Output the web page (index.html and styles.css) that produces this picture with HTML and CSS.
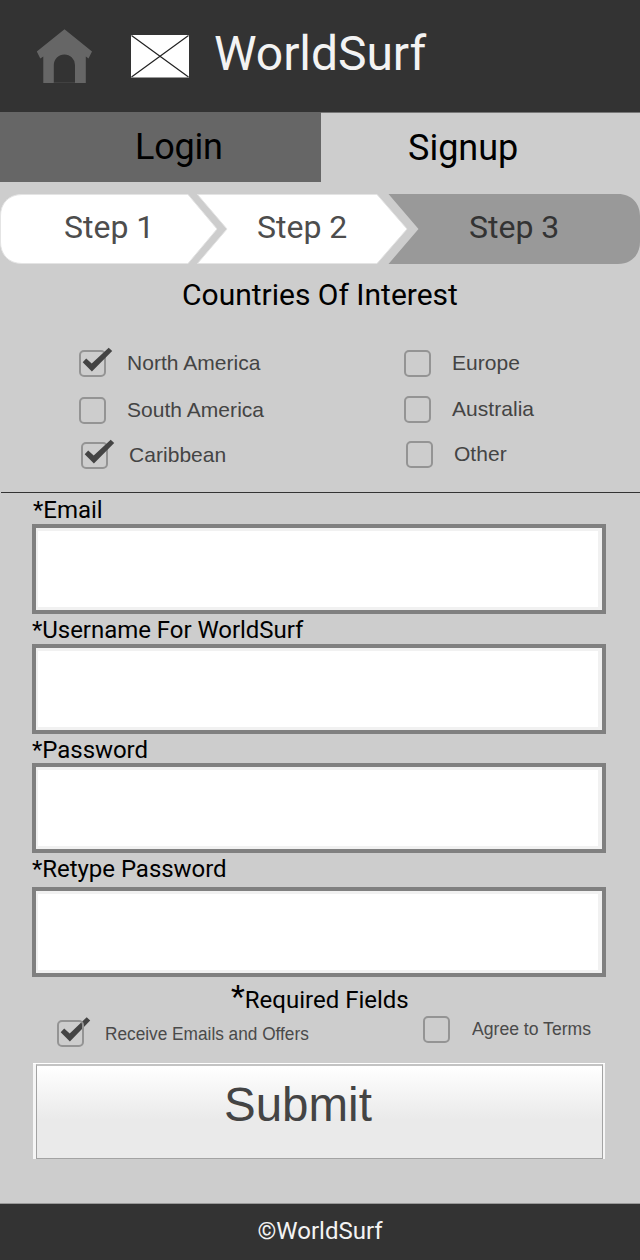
FILE: index.html
```html
<!DOCTYPE html>
<html lang="en">
<head>
<meta charset="utf-8">
<title>WorldSurf</title>
<link rel="stylesheet" href="styles.css">
</head>
<body>
<header class="topbar">
  <svg class="home" width="56" height="54" viewBox="0 0 56 54"><path fill="#666" d="M28.5.3 56 22.5l-3.5 7-2.7-2V54H39V36a10.6 10.6 0 0 0-21.2 0v18H7.3V27.5l-3 2-3.5-7z"/><path stroke="#484848" stroke-width=".7" d="M18 53.500H39"/></svg>
  <svg class="mail" width="58" height="43" viewBox="0 0 58 43"><path fill="#fff" d="M0 0h58v42.5H0z"/><path stroke="#222" stroke-width="1.2" d="M.5.5 57.500 42M57.500.5.5 42"/></svg>
  <h1 class="brand">WorldSurf</h1>
</header>
<nav class="tabs">
  <a class="tab tab-login">Login</a>
  <a class="tab tab-signup">Signup</a>
</nav>
<ol class="steps">
  <svg class="steps-shape" width="640" height="70" viewBox="0 0 640 70">
    <path fill="#fff" stroke="#e4e4e4" d="M22 .5H188L217 35 188 69.500H22C8 69.500.5 60 .5 48V22C.5 10 8 .5 22 .5z"/>
    <path fill="#fff" stroke="#e4e4e4" d="M197.500 .5H377L407 35 377 69.500H197.500L227 35z"/>
    <path fill="#999" d="M388.500 0H618C632 0 640 10 640 22V48C640 60 632 70 618 70H388.500L418.500 35z"/>
  </svg>
  <li class="step step-1">Step 1</li>
  <li class="step step-2">Step 2</li>
  <li class="step step-3">Step 3</li>
</ol>
<h2 class="interest-title">Countries Of Interest</h2>
<section class="interests">
  <div class="column">
    <label class="option"><svg class="box" width="27" height="27"><rect class="frame" x="1" y="1" width="25" height="25" rx="4"/><path class="tick" d="M3.700 12.200 7.200 8.500l5.500 5L29.700-2.300 33.200 1 12.900 21.500z"/></svg>North America</label>
    <label class="option second"><svg class="box" width="27" height="27"><rect class="frame" x="1" y="1" width="25" height="25" rx="4"/></svg>South America</label>
    <label class="option third"><svg class="box" width="27" height="27"><rect class="frame" x="1" y="1" width="25" height="25" rx="4"/><path class="tick" d="M3.700 12.200 7.200 8.500l5.500 5L29.700-2.300 33.200 1 12.900 21.500z"/></svg>Caribbean</label>
  </div>
  <div class="column">
    <label class="option"><svg class="box" width="27" height="27"><rect class="frame" x="1" y="1" width="25" height="25" rx="4"/></svg>Europe</label>
    <label class="option second-right"><svg class="box" width="27" height="27"><rect class="frame" x="1" y="1" width="25" height="25" rx="4"/></svg>Australia</label>
    <label class="option third"><svg class="box" width="27" height="27"><rect class="frame" x="1" y="1" width="25" height="25" rx="4"/></svg>Other</label>
  </div>
</section>
<form class="form">
  <label class="label label-email" for="email">*Email</label>
  <input class="field" id="email" type="text">
  <label class="label" for="user">*Username For WorldSurf</label>
  <input class="field" id="user" type="text">
  <label class="label label-password" for="pass">*Password</label>
  <input class="field" id="pass" type="password">
  <label class="label label-retype" for="pass2">*Retype Password</label>
  <input class="field" id="pass2" type="password">
  <p class="required"><span class="star">*</span>Required Fields</p>
  <div class="consents">
    <label class="consent receive"><svg class="box" width="27" height="27"><path class="tick" d="M3.700 12.200 7.200 8.500l5.500 5L29.700-2.800 33.200.5 12.900 21.500z"/><rect class="frame" x="1" y="1" width="25" height="25" rx="4"/></svg><span class="narrow">Receive Emails and Offers</span></label>
    <label class="consent agree"><svg class="box" width="27" height="27"><rect class="frame" x="1" y="1" width="25" height="25" rx="4"/></svg><span class="narrow narrow-terms">Agree to Terms</span></label>
  </div>
  <div class="submit-wrap"><button class="submit" type="button">Submit</button></div>
</form>
<footer class="footer">©WorldSurf</footer>
</body>
</html>
```
FILE: styles.css
```css
* { box-sizing: border-box; }
body {
  margin: 0;
  width: 640px;
  height: 1260px;
  display: flex;
  flex-direction: column;
  background: #cdcdcd;
  color: #000;
  font-family: Roboto, sans-serif;
}
h1, h2, p, ol { margin: 0; padding: 0; font-weight: 400; }

.topbar {
  display: flex;
  align-items: flex-start;
  height: 112px;
  background: #333;
}
.home { margin: 29px 0 0 36px; }
.mail { margin: 35px 0 0 39px; }
.brand {
  margin-left: 25px;
  font-size: 48px;
  line-height: 107px;
  letter-spacing: -.05px;
  color: #f3f3f3;
}

.tabs { display: flex; height: 70px; box-shadow: inset 0 1px #777; }
.tab { font-size: 36px; }
.tab-login {
  width: 321px;
  padding-left: 135px;
  line-height: 70px;
  letter-spacing: -.2px;
  background: #666;
}
.tab-signup { padding-left: 87px; line-height: 72px; }

.steps {
  position: relative;
  display: flex;
  height: 70px;
  margin-top: 12px;
  list-style: none;
  font-size: 32px;
  line-height: 66px;
  color: #4d4d4d;
}
.steps-shape { position: absolute; inset: 0; }
.step { position: relative; }
.step-1 { width: 193px; padding-left: 64px; }
.step-2 { width: 195px; padding-left: 64px; }
.step-3 { padding-left: 81px; color: #333; }

.interest-title {
  padding-left: 182px;
  font-size: 30px;
  line-height: 62px;
  height: 86px;
}
.interests {
  display: grid;
  grid-template-columns: 325px 1fr;
  height: 143px;
  margin-left: 1px;
  border-bottom: 1px solid #333;
  font-family: "Liberation Sans", sans-serif;
  font-size: 21px;
  line-height: 25px;
  letter-spacing: .04px;
  color: #444;
}
.column { padding-left: 78px; }
.option { display: flex; gap: 21px; height: 27px; }
.second { margin-top: 20px; }
.second-right { margin-top: 19px; }
.third { margin: 18px 0 0 2px; }
.box { flex: none; overflow: visible; }
.frame { fill: none; stroke: #949494; stroke-width: 2; }
.tick { fill: #444; }

.form { display: flex; flex-direction: column; padding: 0 34px 0 32px; }
.label { height: 30px; font-size: 24px; line-height: 33px; letter-spacing: -.04px; }
.label-email { height: 31px; padding-left: 1px; line-height: 34px; }
.label-password { height: 29px; }
.label-retype { height: 34px; }
.field {
  height: 90px;
  padding: 0 12px;
  border: 4px solid #808080;
  border-radius: 0;
  outline: 0;
  background: #fff;
  box-shadow: inset 0 3px #f1f1f1, inset 0 -3px #f1f1f1, inset 2px 0 #f1f1f1, inset -4px 0 #f1f1f1;
  font: 24px Roboto, sans-serif;
}
.required {
  display: flex;
  height: 39px;
  padding-left: 199px;
  font-size: 24px;
  line-height: 47px;
}
.star { font-size: 32px; line-height: 39px; }
.consents {
  display: flex;
  height: 47px;
  font-family: "Liberation Sans", sans-serif;
  font-size: 18px;
  line-height: 27px;
  color: #4a4a4a;
}
.consent { display: flex; gap: 21px; height: 27px; }
.receive { width: 366px; margin-top: 4px; padding-left: 25px; }
.receive .narrow { padding-top: 1px; }
.agree { margin-left: 25px; }
.narrow { white-space: nowrap; transform: scaleX(.958); transform-origin: left; }
.narrow-terms { margin-left: 1px; transform: scaleX(.978); }
.submit-wrap {
  width: 572px;
  height: 96px;
  margin-left: 1px;
  padding: 1px 2px 0 3px;
  background: #f6f6f6;
  box-shadow: inset 0 1px #fff;
}
.submit {
  display: flex;
  align-items: flex-start;
  width: 567px;
  height: 95px;
  padding: 0 0 0 187px;
  border: 1px solid #a3a3a3;
  border-top: 2px solid #c3c3c3;
  border-radius: 0;
  background: linear-gradient(#fff, #eaeaea 58%);
  font: 47.500px/78px "Liberation Sans", sans-serif;
  color: #444;
  text-align: left;
}
.footer {
  height: 57px;
  margin-top: auto;
  border-top: 1px solid #999;
  background: #333;
  color: #f3f3f3;
  font-size: 24px;
  line-height: 54px;
  text-align: center;
}
```
